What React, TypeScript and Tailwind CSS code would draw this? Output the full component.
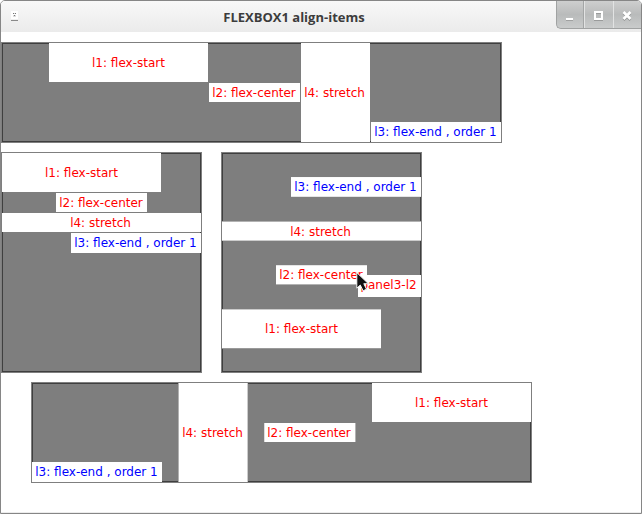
import React from "react";

type BoxProps = { children: React.ReactNode; className?: string };

function Label({ children, className = "" }: BoxProps) {
  return (
    <div
      className={`flex shrink-0 items-center justify-center whitespace-nowrap bg-white font-['DejaVu_Sans',sans-serif] text-[12px] leading-[18px] ${className}`}
    >
      {children}
    </div>
  );
}

function Panel({ children, className = "" }: BoxProps) {
  return (
    <div
      className={`flex shrink-0 border border-[#7f7f7f] bg-[#7e7e7e] shadow-[inset_0_0_0_1px_#3f3f3f] ${className}`}
    >
      {children}
    </div>
  );
}

function TitleBar() {
  return (
    <header className="flex h-[31px] shrink-0 items-start bg-linear-to-b from-[#f8f8f8] to-[#ebebeb]">
      <svg className="ml-[10px] mt-[10px] shrink-0" width="7" height="10" shapeRendering="crispEdges">
        <rect width="7" height="8" fill="#fff" />
        <path d="M2 2h1v1H2zM4 2h1v1H4zM3 4h1v1H3z" fill="#777" />
        <path d="M2 4h1v1H2zM4 4h1v1H4zM3 2h1v1H3zM2 5h3v1H2z" fill="#ddd" />
        <rect y="9" width="7" height="1" fill="#8a8a8a" />
      </svg>
      <h1 className="flex-1 pl-[14px] pt-[6px] text-center font-['Open_Sans',sans-serif] text-[13px] font-bold leading-[20px] text-[#3c3c3c]">
        FLEXBOX1 align-items
      </h1>
      <div className="flex h-[28px] shrink-0 overflow-hidden rounded-bl-[5px] border-b border-l border-[#a0a2a2] bg-linear-to-b from-[#cecfcf] via-[#b9bbbb] to-[#c9cbcb]">
        <div className="w-[27px] border-r border-[#a4a6a6]">
          <svg width="26" height="27" shapeRendering="crispEdges">
            <path d="M9 17h7v2H9z" fill="#fff" />
            <path d="M9 19h7v1H9z" fill="#a0a1a1" />
          </svg>
        </div>
        <div className="w-[30px] border-l border-r border-l-[#e2e3e3] border-r-[#e2e3e3]">
          <svg width="28" height="27" shapeRendering="crispEdges">
            <path d="M9 19h9v1H9z" fill="#9a9b9b" />
            <path d="M9 10h9v9H9zM11 12v5h5v-5z" fill="#fff" fillRule="evenodd" />
            <path d="M11 12h5v1h-5z" fill="#9a9b9b" />
          </svg>
        </div>
        <div className="w-[27px]">
          <svg width="27" height="27">
            <path d="M9.5 12l7 7M16.5 12l-7 7" stroke="#929494" strokeWidth="2.6" />
            <path d="M9.5 11l7 7M16.5 11l-7 7" stroke="#fff" strokeWidth="2.6" />
          </svg>
        </div>
      </div>
    </header>
  );
}

export default function App() {
  return (
    <div className="flex h-[514px] w-[642px] flex-col overflow-hidden rounded-t-[5px] border border-[#868686] bg-white">
      <TitleBar />
      <main className="relative flex flex-1 flex-col items-start border-b border-[#ececec] pt-[10px]">
        <Panel className="h-[101px] w-[501px] items-start gap-px pl-[47px]">
          <Label className="h-[39px] w-[159px] pt-px text-[#ff0000]">l1: flex-start</Label>
          <Label className="h-[19px] w-[91px] self-center pr-px pt-px text-[#ff0000]">l2: flex-center</Label>
          <Label className="w-[69px] self-stretch pr-[2px] pt-px text-[#ff0000]">l4: stretch</Label>
          <Label className="h-[20px] w-[130px] self-end pr-px text-[#0000ff]">l3: flex-end , order 1</Label>
        </Panel>

        <div className="mt-[9px] flex gap-[19px]">
          <Panel className="h-[221px] w-[201px] flex-col items-start gap-px">
            <Label className="h-[39px] w-[159px] pt-px text-[#ff0000]">l1: flex-start</Label>
            <Label className="h-[19px] w-[91px] self-center pr-px pt-px text-[#ff0000]">l2: flex-center</Label>
            <Label className="h-[19px] self-stretch pr-[2px] pt-px text-[#ff0000]">l4: stretch</Label>
            <Label className="h-[20px] w-[130px] self-end pr-px text-[#0000ff]">l3: flex-end , order 1</Label>
          </Panel>

          <Panel className="relative h-[221px] w-[201px] flex-col items-start gap-[24px] pt-[24px]">
            <Label className="h-[20px] w-[130px] self-end border-y border-t-[#fafafa] border-b-[#e5e5e5] pr-px text-[#0000ff]">
              l3: flex-end , order 1
            </Label>
            <Label className="h-[20px] self-stretch border-y border-t-[#b2b2b2] border-b-[#cccccc] pr-[2px] pt-[2px] text-[#ff0000]">
              l4: stretch
            </Label>
            <Label className="h-[20px] w-[91px] self-center border-y border-t-[#e5e5e5] border-b-[#b2b2b2] pr-px text-[#ff0000]">
              l2: flex-center
            </Label>
            <Label className="h-[40px] w-[159px] border-y border-t-[#cccccc] border-b-[#999999] text-[#ff0000]">
              l1: flex-start
            </Label>
            <Label className="absolute right-0 top-[122px] h-[22px] w-[63px] pb-[2px] pr-[2px] text-[#ff0000]">
              panel3-l2
            </Label>
            <svg className="absolute left-[133px] top-[118px]" width="17" height="23">
              <path
                d="M1.8 1.6v15.6l3.5-3.2 2.8 5.8 3.4-1.6-2.7-5.5h4.6z"
                fill="#111"
                stroke="#f2f2f2"
                strokeWidth="1"
              />
            </svg>
          </Panel>
        </div>

        <Panel className="ml-[30px] mt-[9px] h-[101px] w-[501px] items-start">
          <Label className="h-[20px] w-[130px] self-end pr-px text-[#0000ff]">l3: flex-end , order 1</Label>
          <Label className="ml-[16px] w-[70px] self-stretch border-x border-l-[#b2b2b2] border-r-[#cccccc] pr-px pt-px text-[#ff0000]">
            l4: stretch
          </Label>
          <Label className="ml-[16px] h-[19px] w-[92px] self-center border-x border-l-[#dddddd] border-r-[#b2b2b2] pr-[2px] pt-px text-[#ff0000]">
            l2: flex-center
          </Label>
          <Label className="ml-[16px] h-[39px] w-[159px] pt-px text-[#ff0000]">l1: flex-start</Label>
        </Panel>
      </main>
    </div>
  );
}
